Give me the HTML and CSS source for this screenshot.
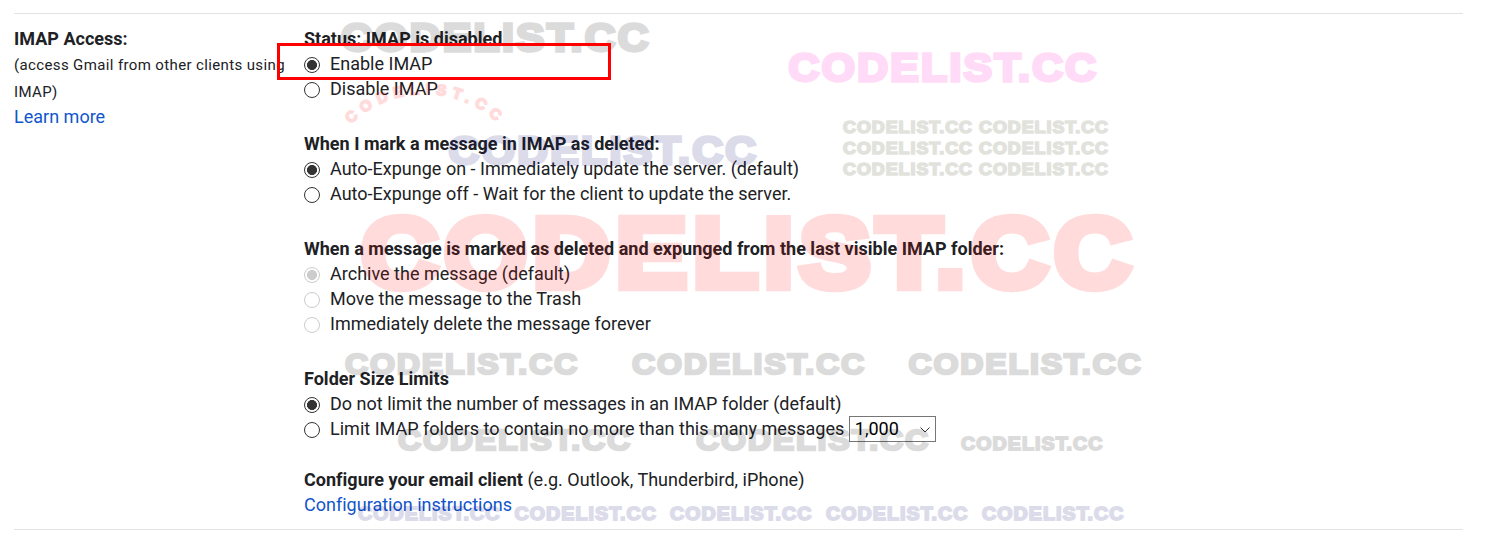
FILE: index.html
```html
<!DOCTYPE html>
<html lang="en">
<head>
<meta charset="utf-8">
<title>IMAP settings</title>
<link rel="stylesheet" href="styles.css">
</head>
<body>
<main class="settings">
  <section class="label-col">
    <h2 class="title">IMAP Access:</h2>
    <p class="hint">(access Gmail from other clients using<br>IMAP)</p>
    <a class="link">Learn more</a>
  </section>
  <section class="options">
    <div class="group">
      <h3 class="title">Status: IMAP is disabled</h3>
      <label class="row"><input type="radio" name="status" checked>Enable IMAP</label>
      <label class="row"><input type="radio" name="status">Disable IMAP</label>
    </div>
    <div class="group">
      <h3 class="title">When I mark a message in IMAP as deleted:</h3>
      <label class="row"><input type="radio" name="expunge" checked>Auto-Expunge on - Immediately update the server. (default)</label>
      <label class="row"><input type="radio" name="expunge">Auto-Expunge off - Wait for the client to update the server.</label>
    </div>
    <div class="group">
      <h3 class="title">When a message is marked as deleted and expunged from the last visible IMAP folder:</h3>
      <label class="row"><input type="radio" name="last" checked disabled>Archive the message (default)</label>
      <label class="row"><input type="radio" name="last" disabled>Move the message to the Trash</label>
      <label class="row"><input type="radio" name="last" disabled>Immediately delete the message forever</label>
    </div>
    <div class="group">
      <h3 class="title">Folder Size Limits</h3>
      <label class="row"><input type="radio" name="limit" checked>Do not limit the number of messages in an IMAP folder (default)</label>
      <div class="row row-select"><input type="radio" name="limit">Limit IMAP folders to contain no more than this many messages
        <span class="select">1,000<svg class="chevron" viewBox="0 0 10 6"><path d="M.5.5 5 5 9.5.5"/></svg></span></div>
    </div>
    <div class="group client">
      <p class="line"><b>Configure your email client</b> (e.g. Outlook, Thunderbird, iPhone)</p>
      <a class="link">Configuration instructions</a>
    </div>
  </section>
</main>
<svg class="marks" viewBox="0 0 1485 533" aria-hidden="true">
  <defs><path id="arc" d="M350.7 124A107 107 0 0 1 499.3 124"/></defs>
  <g class="gray">
    <text class="m" x="341" y="51" textLength="310" lengthAdjust="spacingAndGlyphs">CODELIST.CC</text>
    <text class="s" x="345" y="373.500" textLength="234" lengthAdjust="spacingAndGlyphs">CODELIST.CC</text>
    <text class="s" x="632" y="373.500" textLength="234" lengthAdjust="spacingAndGlyphs">CODELIST.CC</text>
    <text class="s" x="908.500" y="373.500" textLength="234" lengthAdjust="spacingAndGlyphs">CODELIST.CC</text>
    <text class="s" x="398" y="450" textLength="234" lengthAdjust="spacingAndGlyphs">CODELIST.CC</text>
    <text class="s" x="696" y="450" textLength="234" lengthAdjust="spacingAndGlyphs">CODELIST.CC</text>
    <text class="xs" x="961" y="450" textLength="142.500" lengthAdjust="spacingAndGlyphs">CODELIST.CC</text>
  </g>
  <g class="pink"><text class="m" x="788.500" y="81" textLength="310" lengthAdjust="spacingAndGlyphs">CODELIST.CC</text></g>
  <g class="olive">
    <text class="xxs" x="843" y="132.500" textLength="130" lengthAdjust="spacingAndGlyphs">CODELIST.CC</text>
    <text class="xxs" x="979" y="132.500" textLength="130" lengthAdjust="spacingAndGlyphs">CODELIST.CC</text>
    <text class="xxs" x="843" y="154" textLength="130" lengthAdjust="spacingAndGlyphs">CODELIST.CC</text>
    <text class="xxs" x="979" y="154" textLength="130" lengthAdjust="spacingAndGlyphs">CODELIST.CC</text>
    <text class="xxs" x="843" y="175" textLength="130" lengthAdjust="spacingAndGlyphs">CODELIST.CC</text>
    <text class="xxs" x="979" y="175" textLength="130" lengthAdjust="spacingAndGlyphs">CODELIST.CC</text>
  </g>
  <g class="red">
    <text class="xl" x="361" y="287" textLength="776" lengthAdjust="spacingAndGlyphs">CODELIST.CC</text>
    <text class="curved"><textPath href="#arc" textLength="160">CODELIST.CC</textPath></text>
  </g>
  <g class="navy">
    <text class="m" x="448.500" y="164" textLength="310" lengthAdjust="spacingAndGlyphs">CODELIST.CC</text>
    <text class="xs" x="358" y="519.500" textLength="142.500" lengthAdjust="spacingAndGlyphs">CODELIST.CC</text>
    <text class="xs" x="514.500" y="519.500" textLength="142.500" lengthAdjust="spacingAndGlyphs">CODELIST.CC</text>
    <text class="xs" x="670" y="519.500" textLength="142.500" lengthAdjust="spacingAndGlyphs">CODELIST.CC</text>
    <text class="xs" x="826" y="519.500" textLength="142.500" lengthAdjust="spacingAndGlyphs">CODELIST.CC</text>
    <text class="xs" x="982" y="519.500" textLength="142.500" lengthAdjust="spacingAndGlyphs">CODELIST.CC</text>
  </g>
</svg>
<div class="highlight"></div>
</body>
</html>
```
FILE: styles.css
```css
* { box-sizing: border-box; }
body {
  margin: 0;
  position: relative;
  width: 1485px;
  height: 533px;
  overflow: hidden;
  background: #fff;
  color: #202124;
  font: 18px/25px Roboto, sans-serif;
  letter-spacing: .01px;
}
body::before { content: ""; display: table; }
.settings {
  display: grid;
  grid-template-columns: 290px 1fr;
  width: 1449px;
  height: 517px;
  margin: 13px 0 0 14px;
  padding-top: 12px;
  border-top: 1px solid #e3e3e3;
  border-bottom: 1px solid #e3e3e3;
}
.title, .hint, .line { margin: 0; font-size: 18px; }
.title { font-weight: 700; white-space: nowrap; }
.hint { padding-top: 1px; margin-bottom: -2px; font-size: 15px; line-height: 27px; letter-spacing: .37px; white-space: nowrap; }
.link { color: #15c; display: block; }
.group + .group { margin-top: 30px; }
.group + .client { margin-top: 25px; }
.client .line { letter-spacing: .025px; }
.row { display: flex; align-items: center; height: 25px; white-space: nowrap; }
.row-select { height: 26px; align-items: flex-start; }
.row input {
  appearance: none;
  flex: none;
  width: 16px;
  height: 16px;
  margin: 3px 10px 0 0;
  border: 1px solid #333;
  border-radius: 50%;
  background: #fff;
}
.row-select input { margin-top: 6px; }
.row input:checked { background: radial-gradient(circle, #333 4.7px, transparent 5.3px); }
.row input:disabled { border-color: #ccc; }
.row input:disabled:checked { background: radial-gradient(circle, #ccc 4.7px, transparent 5.3px); }
.select {
  display: flex;
  align-items: center;
  justify-content: space-between;
  width: 87px;
  height: 26px;
  margin-left: 4.500px;
  padding: 0 5px 1px;
  border: 1px solid #767676;
  color: #000;
  line-height: 23px;
}
.chevron { width: 10px; height: 6px; margin-top: 2px; fill: none; stroke: #333; stroke-width: 1; }
.marks { position: absolute; left: 0; top: 0; width: 1485px; height: 533px; pointer-events: none; }
.marks text { font-family: "Liberation Sans", Arial, sans-serif; font-weight: 700; letter-spacing: .055em; stroke-linejoin: miter; }
.xl { font-size: 99px; stroke-width: 8.500px; }
.m { font-size: 39.500px; stroke-width: 3.400px; }
.s { font-size: 29.500px; stroke-width: 2.500px; }
.xs { font-size: 18px; stroke-width: 1.800px; }
.xxs { font-size: 16px; stroke-width: 1.600px; }
.marks .curved { font-size: 15px; stroke-width: 1.800px; letter-spacing: 0; }
.gray, .pink, .olive, .red, .navy { opacity: .137; }
.gray { fill: #000; stroke: #000; }
.pink { fill: #ff00c8; stroke: #ff00c8; }
.olive { fill: #333310; stroke: #333310; }
.red { fill: #f00; stroke: #f00; }
.navy { fill: #000070; stroke: #000070; }
.highlight { position: absolute; left: 277px; top: 43px; width: 334px; height: 37px; border: 3px solid #f00; }
```
